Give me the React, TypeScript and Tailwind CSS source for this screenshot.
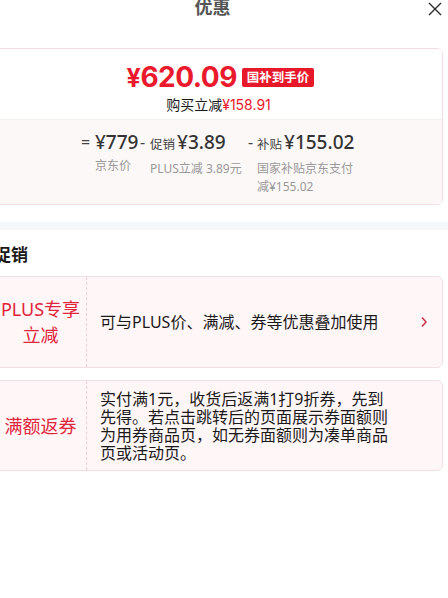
import React from "react";

const cjk = { fontFamily: '"Noto Sans", "Noto Sans CJK SC", sans-serif' };
const num = { fontFamily: 'Inter, "Noto Sans CJK SC", sans-serif' };
const num2 = { fontFamily: '"Noto Sans", "Noto Sans CJK SC", sans-serif' };

function Col({ op, opw, label, value, sub, w }: { op: string; opw: string; label?: string; value: string; sub: string; w: string }) {
  return (
    <div className="flex">
      <div className={`${opw} shrink-0 text-[16px] leading-[24px] text-[#444]`}>{op}</div>
      <div className={`flex flex-col ${w}`}>
        <div className="flex items-baseline whitespace-nowrap text-[#333]">
          {label && <span className="mr-[2px] text-[12.5px] leading-[24px] text-[#444]">{label}</span>}
          <span className="text-[19px] leading-[24px] font-medium" style={num2}>{value}</span>
        </div>
        <div className="mt-[3px] text-[12px] leading-[18px] text-[#999]">{sub}</div>
      </div>
    </div>
  );
}

export default function App() {
  return (
    <div className="w-[448px] h-[598px] overflow-hidden bg-white" style={cjk}>
      <div className="-ml-[6px] w-[449px]">
        <div className="flex h-[16px] items-start">
          <div className="flex-1 -mt-[2px] pl-[4px] text-center text-[18px] leading-[18px] font-bold text-[#555]">优惠</div>
          <svg width="16" height="16" viewBox="0 0 16 16" className="mt-[1px] shrink-0">
            <path d="M2 2 L14 14 M14 2 L2 14" stroke="#2a2a2a" strokeWidth="1.4" fill="none" />
          </svg>
        </div>

        <div className="mt-[32px] rounded-[6px] border border-[#f4dde0] overflow-hidden">
          <div className="bg-white pt-[13px] pb-[4px] flex flex-col items-center">
            <div className="flex items-center h-[30px] pl-[4px]">
              <span className="text-[#ea1a2c] text-[28px] leading-[30px] font-bold tracking-[-0.5px]" style={num}>
                <span className="text-[25px]">¥</span>620.09
              </span>
              <span className="ml-[5px] bg-[#e8182b] text-white text-[12.5px] leading-[19px] font-bold px-[5px] rounded-[2px]">国补到手价</span>
            </div>
            <div className="mt-[3px] text-[14px] leading-[20px] text-[#1a1a1a]">
              购买立减<span className="text-[#e8182b]" style={num}>¥158.91</span>
            </div>
          </div>
          <div className="bg-[#fcf8f8] border-t border-[#f7eeee] pt-[10px] pb-[8px] flex pl-[86px]">
            <Col op="=" opw="w-[14px]" value="¥779" sub="京东价" w="w-[45px]" />
            <Col op="-" opw="w-[10px]" label="促销" value="¥3.89" sub="PLUS立减 3.89元" w="w-[98px]" />
            <Col op="-" opw="w-[9px]" label="补贴" value="¥155.02" sub="国家补贴京东支付减¥155.02" w="w-[100px]" />
          </div>
        </div>

        <div className="mt-[17px] h-[8px] w-[470px] bg-[#f5f8fb]" />

        <div className="mt-[15px] text-[17px] leading-[20px] font-bold text-[#1a1a1a]">促销</div>

        <div className="mt-[11px] flex rounded-[6px] border border-[#f3dfe2] bg-[#fff6f7] h-[92px]">
          <div className="w-[92px] shrink-0 flex items-center justify-center border-r border-dashed border-[#f0cdd2]">
            <div className="text-center text-[18px] leading-[26px] text-[#e0243b]">
              PLUS专享<br />立减
            </div>
          </div>
          <div className="flex-1 flex items-center pl-[13px] pr-[14px]">
            <div className="flex-1 text-[16px] leading-[18px] text-[#1a1a1a] whitespace-nowrap">可与PLUS价、满减、券等优惠叠加使用</div>
            <svg width="8" height="12" viewBox="0 0 8 12" className="shrink-0">
              <path d="M2 1.5 L6 6 L2 10.5" stroke="#d0304a" strokeWidth="1.5" fill="none" />
            </svg>
          </div>
        </div>

        <div className="mt-[12px] flex rounded-[6px] border border-[#f3dfe2] bg-[#fff6f7] h-[91px]">
          <div className="w-[92px] shrink-0 flex items-center justify-center border-r border-dashed border-[#f0cdd2]">
            <div className="text-center text-[18px] leading-[26px] text-[#e0243b]">满额返券</div>
          </div>
          <div className="flex-1 flex items-center pl-[13px]">
            <div className="w-[290px] text-[16px] leading-[18px] text-[#1a1a1a]">
              实付满1元，收货后返满1打9折券，先到先得。若点击跳转后的页面展示券面额则为用券商品页，如无券面额则为凑单商品页或活动页。
            </div>
          </div>
        </div>
      </div>
    </div>
  );
}
